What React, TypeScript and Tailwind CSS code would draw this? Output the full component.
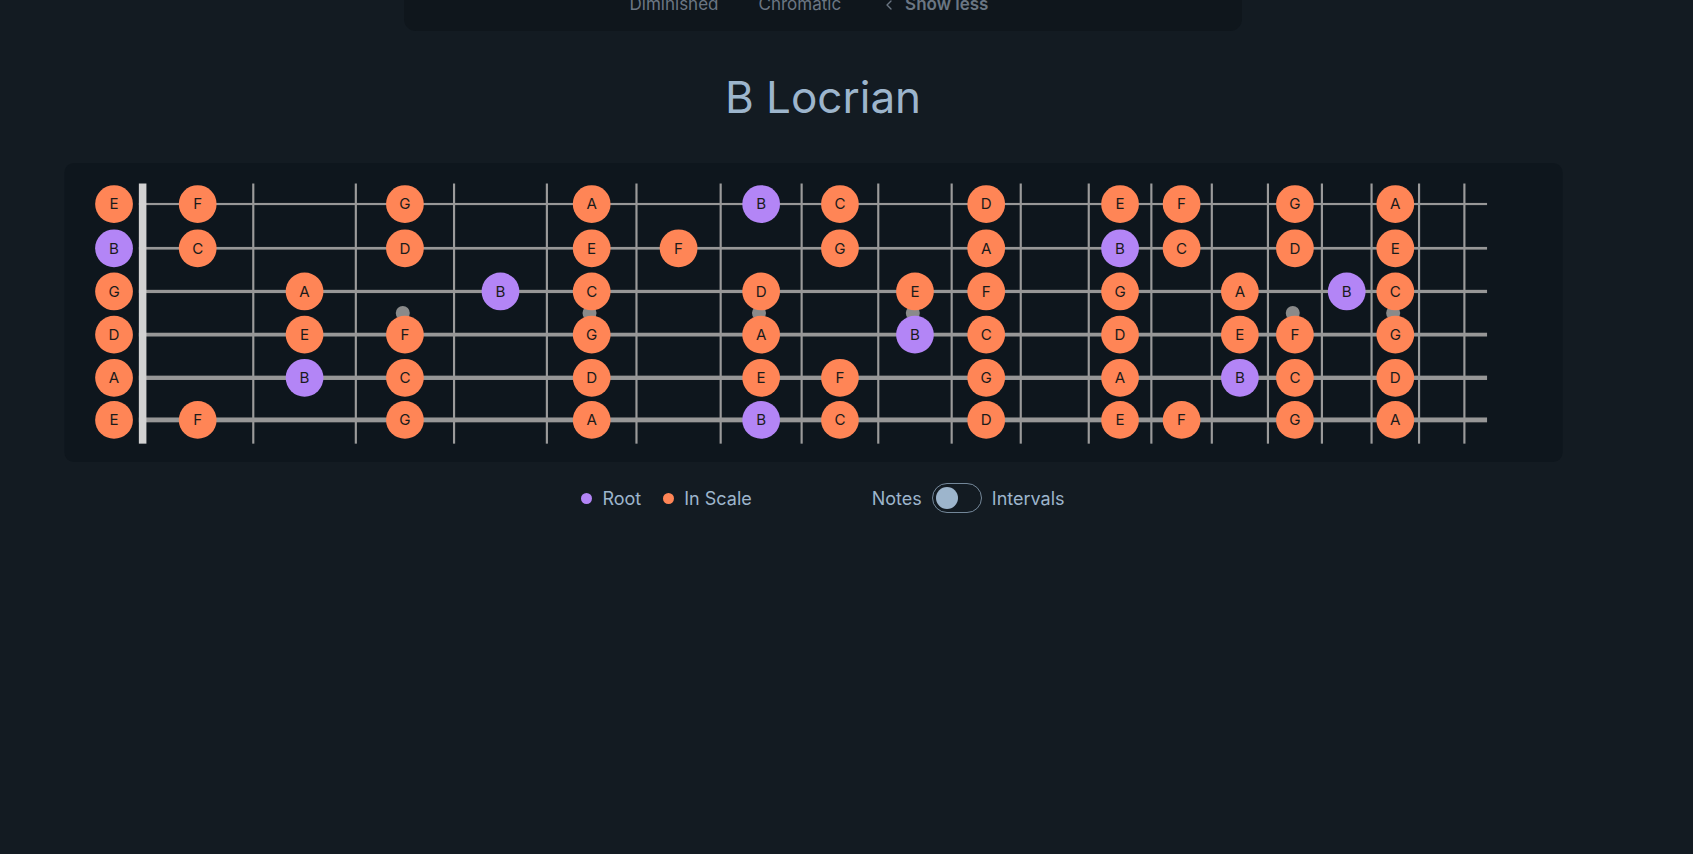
import React from 'react';
import { ChevronLeft } from 'lucide-react';

const FONT = { fontFamily: 'Inter, "Noto Sans", sans-serif' };

/** Chromatic note names, index = semitones above C. */
const CHROMATIC = ['C', 'C#', 'D', 'D#', 'E', 'F', 'F#', 'G', 'G#', 'A', 'A#', 'B'];

/** Open strings, top (high E) to bottom (low E), as semitones above C. */
const TUNING = [4, 11, 7, 2, 9, 4];

/** String y positions and thicknesses in board units. */
const STRING_Y = [189, 230, 270, 310, 350, 389];
const STRING_W = [2, 2.5, 3, 3.5, 4, 4.5];

/** Nut followed by 18 fret wires, x in board units. */
const FRETS = [131, 234, 329, 420, 506, 589, 667, 742, 813, 881, 945, 1008, 1066, 1122, 1174, 1224, 1270, 1314, 1356];

const INLAYS = [3, 5, 7, 9, 15, 17];

const noteX = (fret: number) => (fret === 0 ? 105 : (FRETS[fret - 1] + FRETS[fret]) / 2);

const Fretboard: React.FC = () => {
  const notes: Array<{ x: number; y: number; name: string }> = [];
  TUNING.forEach((open, s) => {
    for (let f = 0; f <= 17; f++) {
      const name = CHROMATIC[(open + f) % 12];
      if (!name.includes('#')) notes.push({ x: noteX(f), y: STRING_Y[s], name });
    }
  });

  return (
    <svg viewBox="59 151 1388 277" width="1499" height="299" className="block">
      <rect x="59" y="151" width="1388" height="277" rx="9" fill="#0e161d" />
      {FRETS.slice(1).map((x) => (
        <rect key={x} x={x - 1} y="170" width="2" height="241" fill="#9b9b9b" />
      ))}
      {STRING_Y.map((y, i) => (
        <rect key={y} x="128" y={y - STRING_W[i] / 2} width="1249" height={STRING_W[i]} fill="#979797" />
      ))}
      <rect x="128" y="170" width="7" height="241" fill="#d2d2d2" />
      {INLAYS.map((f) => (
        <circle key={f} cx={noteX(f) - 2} cy="290" r="6.5" fill="#8a8a8a" />
      ))}
      {notes.map((n, i) => (
        <g key={i}>
          <circle cx={n.x} cy={n.y} r="17.5" fill={n.name === 'B' ? '#b385f6' : '#ff8556'} />
          <text
            x={n.x}
            y={n.y + 5}
            textAnchor="middle"
            fontSize="14"
            fill="#1b1b1b"
            style={{ fontFamily: 'Inter, sans-serif' }}
          >
            {n.name}
          </text>
        </g>
      ))}
    </svg>
  );
};

export default function App() {
  return (
    <div className="min-h-screen bg-[#131b22] overflow-hidden" style={FONT}>
      <div className="flex flex-col items-center pr-[47px]">
        <div className="w-[838px] h-[31px] rounded-b-xl bg-[#0f161c] flex justify-center items-start gap-[40px] pr-[28px]">
          <span className="-mt-[8px] text-[17px] text-[#6b7683]">Diminished</span>
          <span className="-mt-[8px] text-[17px] text-[#6b7683]">Chromatic</span>
          <span className="-mt-[8px] text-[17px] font-semibold text-[#6b7683] flex items-center gap-2">
            <ChevronLeft size={16} strokeWidth={2} />
            Show less
          </span>
        </div>
        <h1 className="mt-[40px] text-[44px] leading-[52px] text-[#9db5cc] font-normal">B Locrian</h1>
      </div>
      <div className="mt-[40px] ml-[64px]">
        <Fretboard />
      </div>
      <div className="mt-[21px] flex items-center justify-center pr-[47px] text-[18px] text-[#9db5cc]">
        <span className="w-[11px] h-[11px] rounded-full bg-[#b385f6]" />
        <span className="ml-[10px]">Root</span>
        <span className="ml-[22px] w-[11px] h-[11px] rounded-full bg-[#ff8556]" />
        <span className="ml-[10px]">In Scale</span>
        <span className="ml-[120px]">Notes</span>
        <span className="ml-[10px] w-[50px] h-[30px] rounded-full border border-[#9db5cc]/70 flex items-center px-[3px]">
          <span className="w-[22px] h-[22px] rounded-full bg-[#9db5cc]" />
        </span>
        <span className="ml-[10px]">Intervals</span>
      </div>
    </div>
  );
}
